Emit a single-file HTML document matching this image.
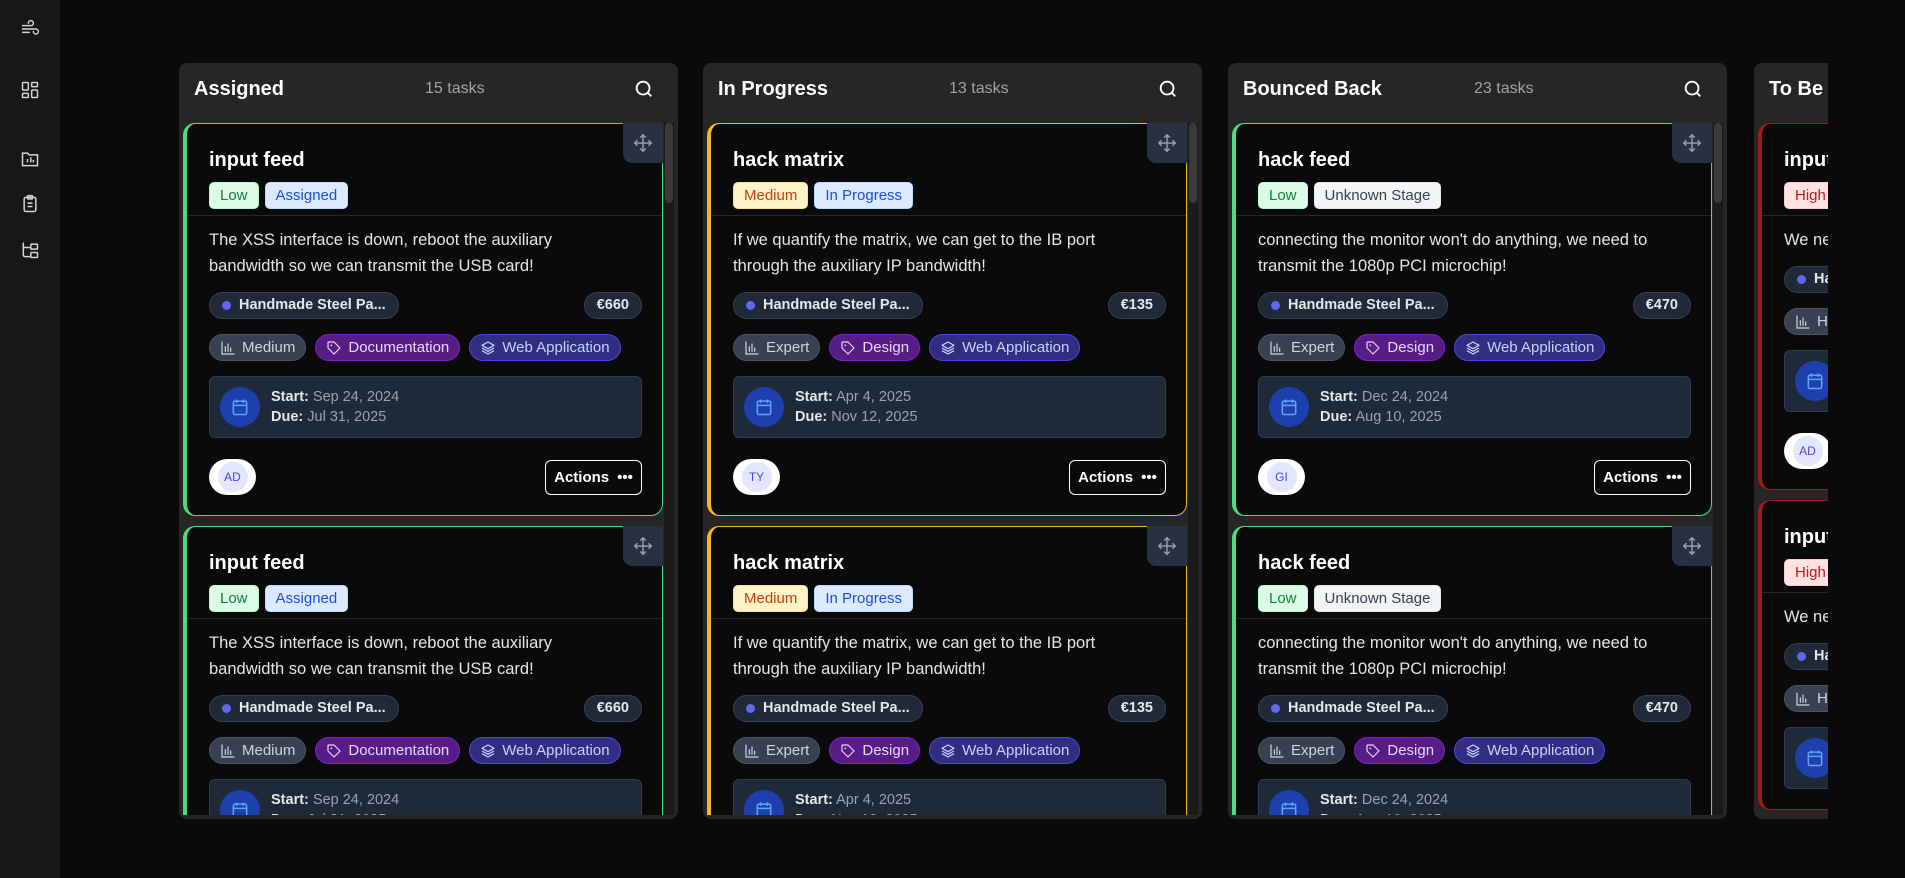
<!DOCTYPE html>
<html><head><meta charset="utf-8">
<style>
*{box-sizing:border-box;margin:0;padding:0}
body{width:1905px;height:878px;background:#0a0a0a;font-family:"Liberation Sans",sans-serif;color:#e5e5e5;overflow:hidden;position:relative}
.side{position:absolute;left:0;top:0;width:60px;height:878px;background:#171717}
.side svg{position:absolute;left:20px}
.board{position:absolute;left:179px;top:63px;width:1649px;height:760px;overflow:hidden}
.col{position:absolute;top:0;width:499px;height:756px;background:#262626;border-radius:8px;overflow:hidden}
.hdr{position:absolute;left:15px;top:14px;font-size:20px;font-weight:bold;color:#fff;line-height:24px}
.cnt{position:absolute;left:246px;top:16px;font-size:16px;color:#a3a3a3;line-height:20px}
.srch{position:absolute;left:454px;top:15px}
.list{position:absolute;left:4px;top:60px;width:482px;height:692px;overflow:hidden}
.sb{position:absolute;left:485px;top:60px;width:10px;height:692px;background:#1a1a1a}
.sb i{position:absolute;left:1px;top:0;width:8px;height:80px;background:#3a3a3a;border-radius:4px}
.card{position:relative;width:480px;background:#0a0a0a;border:1px solid;border-left-width:4px;border-radius:12px;margin-bottom:10px;padding:24px 20px 20px 22px}
.g{border-color:#4ade80}.y{border-color:#f5b71d}.r{border-color:#a21c1c}
.mv{position:absolute;right:-1px;top:-1px;width:40px;height:40px;background:#273142;border-radius:0 0 0 9px;display:flex;align-items:center;justify-content:center}
.tt{font-size:20px;font-weight:bold;color:#fff;line-height:24px}
.bd{margin-top:10px;height:27px;display:flex;gap:6px}
.b{height:27px;padding:0 10px;border-radius:5px;font-size:15px;line-height:25px;border:1px solid}
.low{background:#dcfce7;color:#15803d;border-color:#bbf7d0}
.asg{background:#dbeafe;color:#1d4ed8;border-color:#bfdbfe}
.med{background:#fef3c7;color:#c2410c;border-color:#fde68a}
.hi{background:#fee2e2;color:#b91c1c;border-color:#fecaca}
.unk{background:#f3f4f6;color:#374151;border-color:#e5e7eb}
.dv{height:1px;background:#262626;margin:6px -20px 0 -22px}
.ds{margin-top:11px;font-size:16.5px;line-height:26px;color:#e5e5e5;white-space:nowrap}
.pr{margin-top:13px;display:flex;justify-content:space-between;height:27px}
.pl{height:27px;border-radius:14px;background:#1f2937;border:1px solid #334155;font-size:14.5px;font-weight:bold;color:#e5e7eb;line-height:25px;padding:0 12px;display:flex;align-items:center;gap:8px}
.dot{width:9px;height:9px;border-radius:50%;background:#6366f1}
.tg{margin-top:15px;display:flex;gap:9px;height:27px}
.t{height:27px;border-radius:14px;font-size:15px;line-height:25px;padding:0 10px;display:flex;align-items:center;gap:6px;border:1px solid}
.t1{background:#374151;border-color:#4b5563;color:#d1d5db}
.t2{background:#581c87;border-color:#7e22ce;color:#e9d5ff}
.t3{background:#312e81;border-color:#4f46e5;color:#c7d2fe}
.dt{margin-top:15px;height:62px;background:#1e2939;border:1px solid #2f3b4f;border-radius:6px;display:flex;align-items:center;padding-left:10px;gap:11px}
.cal{width:40px;height:40px;border-radius:50%;background:#1e40af;display:flex;align-items:center;justify-content:center}
.dtx{font-size:14.5px;line-height:20px;color:#9ca3af}
.dtx b{color:#e5e7eb}
.ft{margin-top:21px;height:36px;display:flex;justify-content:space-between;align-items:center}
.av{width:47px;height:36px;border-radius:18px;background:#fff;display:flex;align-items:center;justify-content:center}
.av span{width:30px;height:30px;border-radius:50%;background:#e0e7ff;color:#4f46e5;font-size:12px;display:flex;align-items:center;justify-content:center}
.ac{width:97px;height:35px;border:1px solid #fff;border-radius:6px;font-size:15px;font-weight:bold;color:#fff;display:flex;align-items:center;justify-content:center;gap:8px}
</style></head><body>
<svg width="0" height="0" style="position:absolute">
<defs>
<symbol id="bar" viewBox="0 0 24 24"><path d="M3 3v18h18M8 17V10M12 17V6M16 17v-5" fill="none" stroke="currentColor" stroke-width="1.8" stroke-linecap="round"/></symbol>
<symbol id="tag" viewBox="0 0 24 24"><path d="M3 12V4a1 1 0 0 1 1-1h8l9 9-9 9z" fill="none" stroke="currentColor" stroke-width="1.8" stroke-linejoin="round"/><circle cx="8" cy="8" r="1.3" fill="currentColor"/></symbol>
<symbol id="lay" viewBox="0 0 24 24"><path d="M12 3l9 5-9 5-9-5zM3 12l9 5 9-5M3 16l9 5 9-5" fill="none" stroke="currentColor" stroke-width="1.8" stroke-linejoin="round"/></symbol>
<symbol id="mvi" viewBox="0 0 24 24"><path d="M12 3v18M3 12h18M9 6l3-3 3 3M9 18l3 3 3-3M6 9l-3 3 3 3M18 9l3 3-3 3" fill="none" stroke="#9ca3af" stroke-width="1.5"/></symbol>
<symbol id="cali" viewBox="0 0 24 24"><rect x="4" y="5" width="16" height="16" rx="2" fill="none" stroke="#60a5fa" stroke-width="1.8"/><path d="M4 10h16M8 3v4M16 3v4" stroke="#60a5fa" stroke-width="1.8"/></symbol>
</defs></svg>
<div class="side">
<svg style="top:19px" width="20" height="20" viewBox="0 0 24 24" fill="none" stroke="#d4d4d4" stroke-width="1.8" stroke-linecap="round"><path d="M3 8h10a3 3 0 1 0-3-3M3 12h16a3 3 0 1 1-3 3M3 16h8"/></svg>
<svg style="top:80px" width="20" height="20" viewBox="0 0 24 24" fill="none" stroke="#d4d4d4" stroke-width="1.8"><rect x="3" y="3" width="7" height="9" rx="1"/><rect x="14" y="3" width="7" height="5" rx="1"/><rect x="14" y="12" width="7" height="9" rx="1"/><rect x="3" y="16" width="7" height="5" rx="1"/></svg>
<svg style="top:149px" width="20" height="20" viewBox="0 0 24 24" fill="none" stroke="#d4d4d4" stroke-width="1.8"><path d="M3 5h6l2 2h10v13H3z"/><path d="M9 16v-4M13 16v-6M16 16v-3"/></svg>
<svg style="top:194px" width="20" height="20" viewBox="0 0 24 24" fill="none" stroke="#d4d4d4" stroke-width="1.8"><rect x="5" y="4" width="14" height="17" rx="2"/><rect x="9" y="2" width="6" height="4" rx="1"/><path d="M9 11h6M9 15h6"/></svg>
<svg style="top:240px" width="20" height="20" viewBox="0 0 24 24" fill="none" stroke="#d4d4d4" stroke-width="1.8"><path d="M4 3v15a2 2 0 0 0 2 2h6M4 9h8"/><rect x="13" y="5" width="8" height="6" rx="1"/><rect x="13" y="15" width="8" height="6" rx="1"/></svg>
</div>

<div class="board">
<div class="col" style="left:0">
<div class="hdr">Assigned</div><div class="cnt">15 tasks</div>
<svg class="srch" width="22" height="22" viewBox="0 0 24 24" fill="none" stroke="#fff" stroke-width="2"><circle cx="11" cy="11" r="7"/><path d="M16 16l4 4"/></svg>
<div class="list">
<div class="card g"><div class="mv"><svg width="22" height="22"><use href="#mvi"/></svg></div>
<div class="tt">input feed</div><div class="bd"><span class="b low">Low</span><span class="b asg">Assigned</span></div><div class="dv"></div>
<div class="ds">The XSS interface is down, reboot the auxiliary<br>bandwidth so we can transmit the USB card!</div>
<div class="pr"><div class="pl"><span class="dot"></span>Handmade Steel Pa...</div><div class="pl">€660</div></div>
<div class="tg"><span class="t t1"><svg width="16" height="16"><use href="#bar"/></svg>Medium</span><span class="t t2"><svg width="16" height="16"><use href="#tag"/></svg>Documentation</span><span class="t t3"><svg width="16" height="16"><use href="#lay"/></svg>Web Application</span></div>
<div class="dt"><div class="cal"><svg width="20" height="20"><use href="#cali"/></svg></div><div class="dtx"><b>Start:</b> Sep 24, 2024<br><b>Due:</b> Jul 31, 2025</div></div>
<div class="ft"><div class="av"><span>AD</span></div><div class="ac">Actions <span>•••</span></div></div></div>
<div class="card g"><div class="mv"><svg width="22" height="22"><use href="#mvi"/></svg></div>
<div class="tt">input feed</div><div class="bd"><span class="b low">Low</span><span class="b asg">Assigned</span></div><div class="dv"></div>
<div class="ds">The XSS interface is down, reboot the auxiliary<br>bandwidth so we can transmit the USB card!</div>
<div class="pr"><div class="pl"><span class="dot"></span>Handmade Steel Pa...</div><div class="pl">€660</div></div>
<div class="tg"><span class="t t1"><svg width="16" height="16"><use href="#bar"/></svg>Medium</span><span class="t t2"><svg width="16" height="16"><use href="#tag"/></svg>Documentation</span><span class="t t3"><svg width="16" height="16"><use href="#lay"/></svg>Web Application</span></div>
<div class="dt"><div class="cal"><svg width="20" height="20"><use href="#cali"/></svg></div><div class="dtx"><b>Start:</b> Sep 24, 2024<br><b>Due:</b> Jul 31, 2025</div></div>
<div class="ft"><div class="av"><span>AD</span></div><div class="ac">Actions <span>•••</span></div></div></div>
</div><div class="sb"><i></i></div></div>

<div class="col" style="left:524px">
<div class="hdr">In Progress</div><div class="cnt">13 tasks</div>
<svg class="srch" width="22" height="22" viewBox="0 0 24 24" fill="none" stroke="#fff" stroke-width="2"><circle cx="11" cy="11" r="7"/><path d="M16 16l4 4"/></svg>
<div class="list">
<div class="card y"><div class="mv"><svg width="22" height="22"><use href="#mvi"/></svg></div>
<div class="tt">hack matrix</div><div class="bd"><span class="b med">Medium</span><span class="b asg">In Progress</span></div><div class="dv"></div>
<div class="ds">If we quantify the matrix, we can get to the IB port<br>through the auxiliary IP bandwidth!</div>
<div class="pr"><div class="pl"><span class="dot"></span>Handmade Steel Pa...</div><div class="pl">€135</div></div>
<div class="tg"><span class="t t1"><svg width="16" height="16"><use href="#bar"/></svg>Expert</span><span class="t t2"><svg width="16" height="16"><use href="#tag"/></svg>Design</span><span class="t t3"><svg width="16" height="16"><use href="#lay"/></svg>Web Application</span></div>
<div class="dt"><div class="cal"><svg width="20" height="20"><use href="#cali"/></svg></div><div class="dtx"><b>Start:</b> Apr 4, 2025<br><b>Due:</b> Nov 12, 2025</div></div>
<div class="ft"><div class="av"><span>TY</span></div><div class="ac">Actions <span>•••</span></div></div></div>
<div class="card y"><div class="mv"><svg width="22" height="22"><use href="#mvi"/></svg></div>
<div class="tt">hack matrix</div><div class="bd"><span class="b med">Medium</span><span class="b asg">In Progress</span></div><div class="dv"></div>
<div class="ds">If we quantify the matrix, we can get to the IB port<br>through the auxiliary IP bandwidth!</div>
<div class="pr"><div class="pl"><span class="dot"></span>Handmade Steel Pa...</div><div class="pl">€135</div></div>
<div class="tg"><span class="t t1"><svg width="16" height="16"><use href="#bar"/></svg>Expert</span><span class="t t2"><svg width="16" height="16"><use href="#tag"/></svg>Design</span><span class="t t3"><svg width="16" height="16"><use href="#lay"/></svg>Web Application</span></div>
<div class="dt"><div class="cal"><svg width="20" height="20"><use href="#cali"/></svg></div><div class="dtx"><b>Start:</b> Apr 4, 2025<br><b>Due:</b> Nov 12, 2025</div></div>
<div class="ft"><div class="av"><span>TY</span></div><div class="ac">Actions <span>•••</span></div></div></div>
</div><div class="sb"><i></i></div></div>

<div class="col" style="left:1049px">
<div class="hdr">Bounced Back</div><div class="cnt">23 tasks</div>
<svg class="srch" width="22" height="22" viewBox="0 0 24 24" fill="none" stroke="#fff" stroke-width="2"><circle cx="11" cy="11" r="7"/><path d="M16 16l4 4"/></svg>
<div class="list">
<div class="card g"><div class="mv"><svg width="22" height="22"><use href="#mvi"/></svg></div>
<div class="tt">hack feed</div><div class="bd"><span class="b low">Low</span><span class="b unk">Unknown Stage</span></div><div class="dv"></div>
<div class="ds">connecting the monitor won't do anything, we need to<br>transmit the 1080p PCI microchip!</div>
<div class="pr"><div class="pl"><span class="dot"></span>Handmade Steel Pa...</div><div class="pl">€470</div></div>
<div class="tg"><span class="t t1"><svg width="16" height="16"><use href="#bar"/></svg>Expert</span><span class="t t2"><svg width="16" height="16"><use href="#tag"/></svg>Design</span><span class="t t3"><svg width="16" height="16"><use href="#lay"/></svg>Web Application</span></div>
<div class="dt"><div class="cal"><svg width="20" height="20"><use href="#cali"/></svg></div><div class="dtx"><b>Start:</b> Dec 24, 2024<br><b>Due:</b> Aug 10, 2025</div></div>
<div class="ft"><div class="av"><span>GI</span></div><div class="ac">Actions <span>•••</span></div></div></div>
<div class="card g"><div class="mv"><svg width="22" height="22"><use href="#mvi"/></svg></div>
<div class="tt">hack feed</div><div class="bd"><span class="b low">Low</span><span class="b unk">Unknown Stage</span></div><div class="dv"></div>
<div class="ds">connecting the monitor won't do anything, we need to<br>transmit the 1080p PCI microchip!</div>
<div class="pr"><div class="pl"><span class="dot"></span>Handmade Steel Pa...</div><div class="pl">€470</div></div>
<div class="tg"><span class="t t1"><svg width="16" height="16"><use href="#bar"/></svg>Expert</span><span class="t t2"><svg width="16" height="16"><use href="#tag"/></svg>Design</span><span class="t t3"><svg width="16" height="16"><use href="#lay"/></svg>Web Application</span></div>
<div class="dt"><div class="cal"><svg width="20" height="20"><use href="#cali"/></svg></div><div class="dtx"><b>Start:</b> Dec 24, 2024<br><b>Due:</b> Aug 10, 2025</div></div>
<div class="ft"><div class="av"><span>GI</span></div><div class="ac">Actions <span>•••</span></div></div></div>
</div><div class="sb"><i></i></div></div>

<div class="col" style="left:1575px">
<div class="hdr">To Be Reviewed</div><div class="cnt">8 tasks</div>
<div class="list">
<div class="card r">
<div class="tt">input feed</div><div class="bd"><span class="b hi">High</span><span class="b asg">To Be Reviewed</span></div><div class="dv"></div>
<div class="ds">We need to reboot the feed!</div>
<div class="pr"><div class="pl"><span class="dot"></span>Handmade Steel Pa...</div><div class="pl">€300</div></div>
<div class="tg"><span class="t t1"><svg width="16" height="16"><use href="#bar"/></svg>Hard</span></div>
<div class="dt"><div class="cal"><svg width="20" height="20"><use href="#cali"/></svg></div><div class="dtx"><b>Start:</b> Jan 1, 2025<br><b>Due:</b> Jun 1, 2025</div></div>
<div class="ft"><div class="av"><span>AD</span></div></div></div>
<div class="card r">
<div class="tt">input feed</div><div class="bd"><span class="b hi">High</span></div><div class="dv"></div>
<div class="ds">We need to reboot the feed!</div>
<div class="pr"><div class="pl"><span class="dot"></span>Handmade Steel Pa...</div></div>
<div class="tg"><span class="t t1"><svg width="16" height="16"><use href="#bar"/></svg>Hard</span></div>
<div class="dt"><div class="cal"><svg width="20" height="20"><use href="#cali"/></svg></div><div class="dtx"><b>Start:</b> Jan 1, 2025</div></div>
</div>
</div></div>
</div>
</body></html>
